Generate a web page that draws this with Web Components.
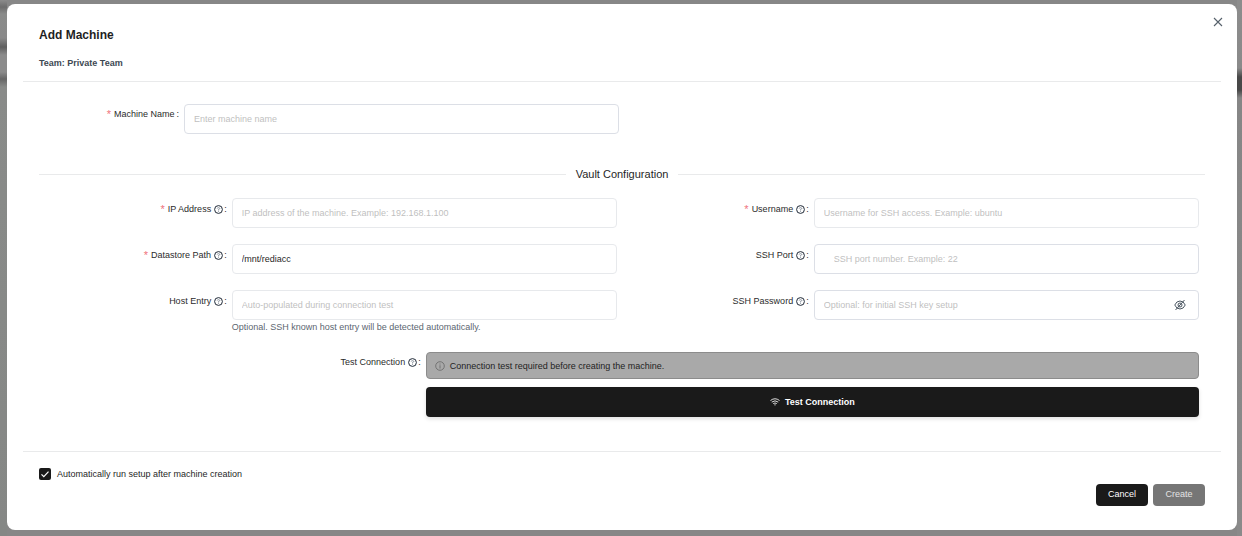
<!DOCTYPE html>
<html lang="en">
<head>
<meta charset="utf-8">
<meta name="viewport" content="width=device-width, initial-scale=1">
<title>Add Machine</title>
<style>
  :root {
    --color-text: #1f1f1f;
    --color-label: #2b2b2b;
    --color-secondary: #5c6670;
    --color-placeholder: #bfbfbf;
    --color-border: #dcdfe6;
    --color-border-light: #e7e9ec;
    --color-line: #e9eaeb;
    --color-primary: #1a1a1a;
    --color-required: #f0727c;
    --radius: 4px;
  }

  body {
    margin: 0;
    font-family: "Liberation Sans", Arial, sans-serif;
    font-size: 9px;
    color: var(--color-text);
  }
</style>
</head>
<body>
<machine-backdrop>
  <machine-dialog heading="Add Machine" subheading="Team: Private Team">
    <form-field class="name" label="Machine Name" placeholder="Enter machine name" required></form-field>

    <section-divider>Vault Configuration</section-divider>

    <vault-grid>
      <form-field label="IP Address" placeholder="IP address of the machine. Example: 192.168.1.100" required hint light></form-field>
      <form-field label="Username" placeholder="Username for SSH access. Example: ubuntu" required hint light></form-field>
      <form-field label="Datastore Path" value="/mnt/rediacc" required hint light></form-field>
      <form-field label="SSH Port" placeholder="SSH port number. Example: 22" hint inset></form-field>
      <form-field label="Host Entry" placeholder="Auto-populated during connection test" help="Optional. SSH known host entry will be detected automatically." hint light></form-field>
      <form-field label="SSH Password" placeholder="Optional: for initial SSH key setup" type="password" hint></form-field>
    </vault-grid>

    <connection-test></connection-test>

    <setup-checkbox slot="footer">Automatically run setup after machine creation</setup-checkbox>
    <action-button slot="actions">Cancel</action-button>
    <action-button slot="actions" disabled>Create</action-button>
  </machine-dialog>
</machine-backdrop>

<script>
const HINT_ICON = `
  <svg class="hint" viewBox="0 0 18 18" width="9" height="9" aria-hidden="true">
    <circle cx="9" cy="9" r="7.8" fill="none" stroke="#1f2937" stroke-width="2"/>
    <path d="M6.400 7q0-1.600 2.600-1.600t2.600 1.600q0 1.200-2.600 2v2M9 12v1.600" fill="none" stroke="#6b7583" stroke-width="1.500"/>
  </svg>`;

const LABEL_STYLES = `
  .label {
    display: flex;
    justify-content: flex-end;
    align-items: center;
    height: 22px;
    padding-right: 5px;
    color: var(--color-label);
    white-space: nowrap;
  }

  .hint {
    margin: 0 1px 0 3px;
  }
`;

// Dimmed page behind the dialog
class MachineBackdrop extends HTMLElement {
  constructor() {
    super();
    this.attachShadow({ mode: 'open' });
  }

  connectedCallback() {
    this.shadowRoot.innerHTML = `
      <style>
        :host {
          display: block;
          box-sizing: border-box;
          min-height: 100vh;
          padding: 4px 5px 6px 7px;
          background:
            linear-gradient(to bottom, #8b8b8b 0, #6d6d6d 7px, #8a8b8a 14px, #898989 38px, #5f5f5f 47px, #8b8b8b 55px, #8b8b8b 72px, #666 79px, #898b89 87px, #858785 100%) left / 7px 100% no-repeat,
            linear-gradient(to bottom, #8c8c8c 0, #8a8a8a 68px, #484848 77px, #484848 90px, #868686 98px, #8a8a8a 100%) right / 5px 100% no-repeat,
            #878787;
        }
      </style>
      <slot></slot>
    `;
  }
}

class MachineDialog extends HTMLElement {
  constructor() {
    super();
    this.attachShadow({ mode: 'open' });
  }

  connectedCallback() {
    this.shadowRoot.innerHTML = `
      <style>
        :host {
          display: block;
          position: relative;
          background: #fff;
          border-radius: 8px;
        }

        header {
          margin: 0 16px;
          padding: 20px 16px 9px;
          border-bottom: 1px solid var(--color-line);
        }

        h1 {
          margin: 0 0 8px;
          font-size: 12px;
          line-height: 22px;
        }

        p {
          margin: 0;
          font-weight: bold;
          line-height: 18px;
          color: #3d4852;
        }

        .close {
          position: absolute;
          top: 10px;
          right: 11px;
          display: grid;
          place-items: center;
          width: 16px;
          height: 16px;
          padding: 0;
          border: 0;
          background: none;
        }

        main {
          padding: 22px 32px 34px;
        }

        footer {
          margin: 0 16px;
          padding: 14px 16px 24px;
          border-top: 1px solid var(--color-line);
        }

        .actions {
          display: flex;
          justify-content: flex-end;
          gap: 5px;
          margin-top: 2px;
        }
      </style>

      <div role="dialog" aria-labelledby="heading">
        <header>
          <h1 id="heading">${this.getAttribute('heading')}</h1>
          <p>${this.getAttribute('subheading')}</p>
        </header>
        <button class="close" type="button" aria-label="Close">
          <svg viewBox="0 0 10 10" width="10" height="10">
            <path d="M1 1l8 8M9 1l-8 8" fill="none" stroke="#56616b" stroke-width="1.1"/>
          </svg>
        </button>
        <main><slot></slot></main>
        <footer>
          <slot name="footer"></slot>
          <div class="actions"><slot name="actions"></slot></div>
        </footer>
      </div>
    `;
  }
}

class SectionDivider extends HTMLElement {
  constructor() {
    super();
    this.attachShadow({ mode: 'open' });
  }

  connectedCallback() {
    this.shadowRoot.innerHTML = `
      <style>
        :host {
          display: flex;
          align-items: center;
          gap: 10px;
          margin: 30px 0 14px;
          font-size: 11px;
          line-height: 20px;
        }

        :host::before,
        :host::after {
          content: '';
          flex: 1;
          height: 1px;
          background: var(--color-line);
        }
      </style>
      <slot></slot>
    `;
  }
}

class VaultGrid extends HTMLElement {
  constructor() {
    super();
    this.attachShadow({ mode: 'open' });
  }

  connectedCallback() {
    this.shadowRoot.innerHTML = `
      <style>
        :host {
          display: grid;
          grid-template-columns: 1fr 1fr;
          gap: 16px 4px;
          padding-right: 6px;
        }
      </style>
      <slot></slot>
    `;
  }
}

class FormField extends HTMLElement {
  constructor() {
    super();
    this.attachShadow({ mode: 'open' });
  }

  connectedCallback() {
    const help = this.getAttribute('help');
    const type = this.getAttribute('type') || 'text';

    this.shadowRoot.innerHTML = `
      <style>
        ${LABEL_STYLES}

        :host {
          display: grid;
          grid-template-columns: 1fr 2fr;
          align-items: start;
        }

        :host(.name) {
          grid-template-columns: 1fr 3fr;
          width: calc(50% - 3px);
        }

        :host(.name) .label {
          height: 20px;
        }

        :host(.name) .colon {
          margin-left: 2px;
        }

        .required {
          margin-right: 3px;
          font-size: 11px;
          color: var(--color-required);
        }

        .box {
          display: flex;
          align-items: center;
          box-sizing: border-box;
          height: 30px;
          padding: 0 12px 0 9px;
          border: 1px solid var(--color-border);
          border-radius: var(--radius);
        }

        :host([light]) .box {
          border-color: var(--color-border-light);
        }

        :host([inset]) .box {
          padding-left: 19px;
        }

        input {
          flex: 1;
          min-width: 0;
          padding: 0;
          border: 0;
          outline: none;
          background: none;
          font: inherit;
          color: var(--color-text);
        }

        input::placeholder {
          color: var(--color-placeholder);
        }

        .reveal {
          display: flex;
          padding: 0;
          border: 0;
          background: none;
        }

        .help {
          line-height: 14px;
          color: var(--color-secondary);
        }
      </style>

      <label class="label" for="control">
        ${this.hasAttribute('required') ? '<span class="required">*</span>' : ''}
        <span>${this.getAttribute('label')}</span>
        ${this.hasAttribute('hint') ? HINT_ICON : ''}
        <span class="colon">:</span>
      </label>
      <div>
        <div class="box">
          <input id="control" type="${type}"
            placeholder="${this.getAttribute('placeholder') || ''}"
            value="${this.getAttribute('value') || ''}">
          ${type === 'password' ? this.revealButton() : ''}
        </div>
        ${help ? `<div class="help">${help}</div>` : ''}
      </div>
    `;
  }

  revealButton() {
    return `
      <button class="reveal" type="button" aria-label="Show password">
        <svg viewBox="0 0 24 24" width="12" height="12" fill="none" stroke="#4a5560" stroke-width="2">
          <path d="M1.500 12q3.500-8 10.500-8t10.500 8q-3.500 8-10.500 8T1.500 12z"/>
          <circle cx="12" cy="12" r="4"/>
          <path d="M3 22L21 2"/>
        </svg>
      </button>
    `;
  }
}

class ConnectionTest extends HTMLElement {
  constructor() {
    super();
    this.attachShadow({ mode: 'open' });
  }

  connectedCallback() {
    this.shadowRoot.innerHTML = `
      <style>
        ${LABEL_STYLES}

        :host {
          display: grid;
          grid-template-columns: 1fr 2fr;
          align-items: start;
          margin-top: 18px;
          padding-right: 6px;
        }

        .label {
          height: 20px;
        }

        .stack {
          display: grid;
          gap: 8px;
        }

        .alert {
          display: flex;
          align-items: center;
          gap: 5px;
          box-sizing: border-box;
          height: 27px;
          padding: 0 8px;
          border: 1px solid #8c8c8c;
          border-radius: var(--radius);
          background: #a9a9a9;
        }

        .test {
          display: flex;
          justify-content: center;
          align-items: center;
          gap: 5px;
          height: 30px;
          padding: 0;
          border: 0;
          border-radius: var(--radius);
          background: var(--color-primary);
          box-shadow: 0 2px 4px rgba(0, 0, 0, 0.12);
          font: inherit;
          font-weight: bold;
          color: #fff;
        }
      </style>

      <div class="label"><span>Test Connection</span>${HINT_ICON}<span>:</span></div>
      <div class="stack">
        <div class="alert" role="alert">
          <svg viewBox="0 0 20 20" width="10" height="10" fill="none" stroke="#666" stroke-width="1.6">
            <circle cx="10" cy="10" r="8.600"/>
            <path d="M10 5v2M10 8.500v6.500"/>
          </svg>
          <span>Connection test required before creating the machine.</span>
        </div>
        <button class="test" type="button">
          <svg viewBox="0 0 20 16" width="10" height="8" fill="none" stroke="#fff" stroke-width="1.700">
            <path d="M1 5q9-7 18 0M3.500 8.200q6.500-5 13 0M6.500 11.200q3.500-2.600 7 0"/>
            <circle cx="10" cy="13.600" r="1.300" fill="#fff" stroke="none"/>
          </svg>
          <span>Test Connection</span>
        </button>
      </div>
    `;
  }
}

class SetupCheckbox extends HTMLElement {
  constructor() {
    super();
    this.attachShadow({ mode: 'open' });
  }

  connectedCallback() {
    this.shadowRoot.innerHTML = `
      <style>
        :host {
          display: block;
        }

        label {
          display: flex;
          align-items: center;
          gap: 6px;
          height: 16px;
        }

        .check {
          display: grid;
          place-items: center;
        }

        input,
        svg {
          grid-area: 1 / 1;
        }

        input {
          appearance: none;
          width: 12px;
          height: 12px;
          margin: 0;
          border-radius: 2px;
          background: var(--color-primary);
        }

        svg {
          z-index: 1;
          pointer-events: none;
        }
      </style>
      <label>
        <span class="check">
          <input type="checkbox" checked>
          <svg viewBox="0 0 12 12" width="12" height="12">
            <path d="M2.500 6.400l2.300 2.300 4.700-5" fill="none" stroke="#fff" stroke-width="1.200"/>
          </svg>
        </span>
        <span><slot></slot></span>
      </label>
    `;
  }
}

class ActionButton extends HTMLElement {
  constructor() {
    super();
    this.attachShadow({ mode: 'open' });
  }

  connectedCallback() {
    this.shadowRoot.innerHTML = `
      <style>
        :host {
          display: block;
        }

        button {
          display: block;
          min-width: 52px;
          height: 22px;
          padding: 0 10px 2px;
          border: 0;
          border-radius: var(--radius);
          background: var(--color-primary);
          font: inherit;
          color: #fff;
        }

        button:disabled {
          background: #767676;
          color: #e4e4e4;
        }
      </style>
      <button type="button" ${this.hasAttribute('disabled') ? 'disabled' : ''}><slot></slot></button>
    `;
  }
}

customElements.define('machine-backdrop', MachineBackdrop);
customElements.define('machine-dialog', MachineDialog);
customElements.define('section-divider', SectionDivider);
customElements.define('vault-grid', VaultGrid);
customElements.define('form-field', FormField);
customElements.define('connection-test', ConnectionTest);
customElements.define('setup-checkbox', SetupCheckbox);
customElements.define('action-button', ActionButton);
</script>
</body>
</html>
